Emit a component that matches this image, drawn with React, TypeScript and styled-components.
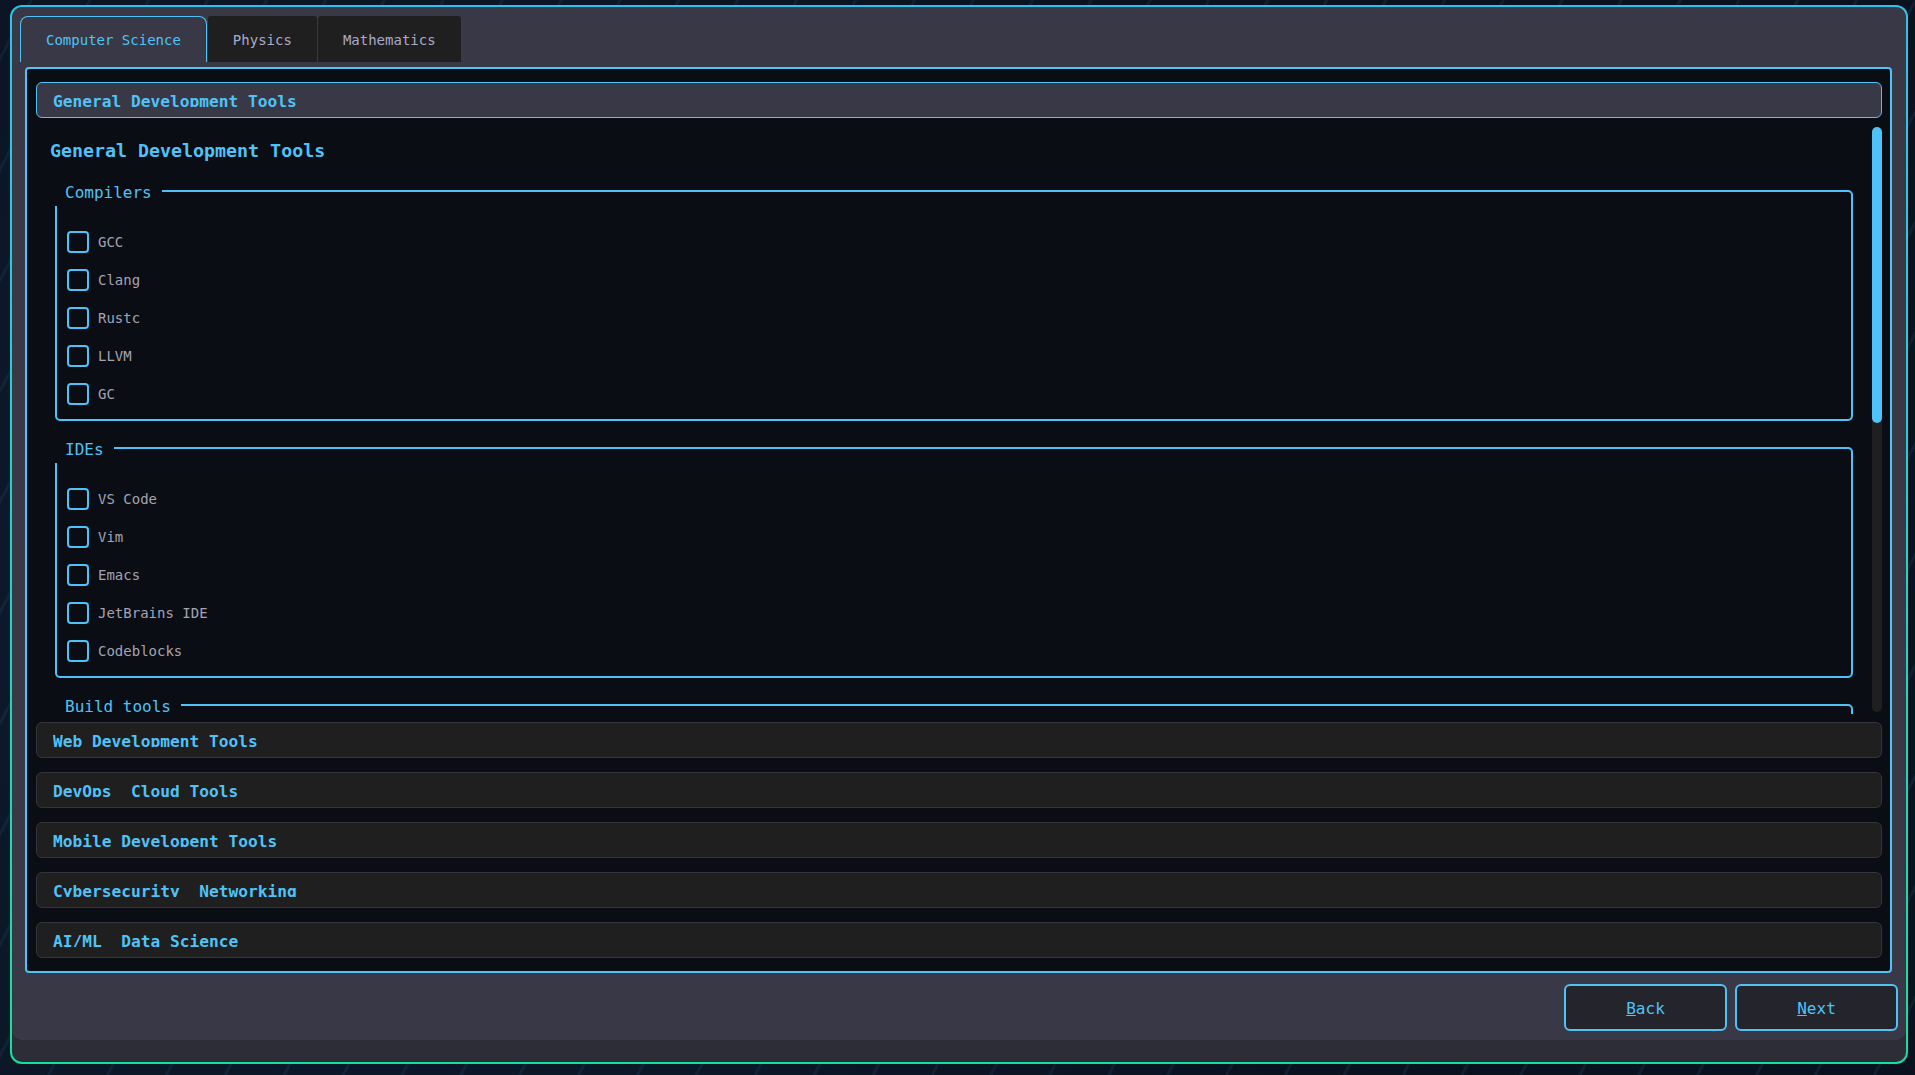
import React from "react";
import styled, { createGlobalStyle } from "styled-components";

const GlobalStyle = createGlobalStyle`
  html, body { margin: 0; padding: 0; }
  body {
    width: 1915px;
    height: 1075px;
    overflow: hidden;
    background-color: #0a1220;
    background-image:
      repeating-linear-gradient(118deg, transparent 0 26px, rgba(34, 74, 112, 0.22) 26px 29px, transparent 29px 52px),
      radial-gradient(circle at 20% 60%, #0e1d30 0%, #0a1220 60%);
    font-family: "DejaVu Sans Mono", "Liberation Mono", monospace;
  }
  #root { width: 1915px; height: 1075px; }
`;

const ACCENT = "#4fc3f7";

const Window = styled.div`
  box-sizing: border-box;
  margin: 5px 7px 0 10px;
  width: 1898px;
  height: 1059px;
  border: 2px solid transparent;
  border-radius: 12px;
  background:
    linear-gradient(#2d2d38, #2d2d38) padding-box,
    linear-gradient(180deg, #2cc3ea 0%, #1fd3c8 50%, #12e09c 100%) border-box;
  display: flex;
  flex-direction: column;
  padding-bottom: 22px;
  overflow: hidden;
`;

const Panel = styled.div`
  flex: 1;
  background: #383846;
  border-radius: 10px;
  display: flex;
  flex-direction: column;
  padding: 9px 0 9px 0;
  min-height: 0;
`;

const TabBar = styled.div`
  display: flex;
  gap: 1px;
  padding-left: 8px;
  height: 46px;
  margin-bottom: 5px;
`;

const Tab = styled.button<{ $active?: boolean }>`
  box-sizing: border-box;
  height: 46px;
  padding: 0 25px;
  font-family: "DejaVu Sans Mono", monospace;
  font-size: 14px;
  color: ${(p) => (p.$active ? ACCENT : "#a9a9c8")};
  background: ${(p) => (p.$active ? "#383846" : "#1f1f1f")};
  border: ${(p) => (p.$active ? `1px solid ${ACCENT}` : "none")};
  border-bottom: none;
  border-radius: ${(p) => (p.$active ? "8px 8px 0 0" : "3px 3px 0 0")};
  cursor: pointer;
  display: flex;
  align-items: center;
  padding-top: 1px;
`;

const Frame = styled.div`
  box-sizing: border-box;
  flex: 1;
  margin: 0 14px 0 13px;
  border: 2px solid ${ACCENT};
  border-radius: 4px;
  background: #0a0d14;
  padding: 13px 8px 13px 9px;
  display: flex;
  flex-direction: column;
  min-height: 0;
`;

const Item = styled.div<{ $open?: boolean }>`
  display: flex;
  flex-direction: column;
  padding-bottom: ${(p) => (p.$open ? "8px" : "14px")};
  &:last-child { padding-bottom: 0; }
`;

const Header = styled.div<{ $open?: boolean }>`
  box-sizing: border-box;
  height: 36px;
  border: 1px solid ${(p) => (p.$open ? ACCENT : "#34343c")};
  background: ${(p) => (p.$open ? "#383846" : "#1f1f1f")};
  border-radius: 6px;
  padding: 9px 16px 0 16px;
`;

const HeaderLabel = styled.div`
  height: 15px;
  overflow: hidden;
  font-size: 16.2px;
  line-height: 20px;
  font-weight: bold;
  color: ${ACCENT};
  white-space: pre;
`;

const Body = styled.div`
  margin-top: 8px;
  height: 588px;
  display: flex;
`;

const Viewport = styled.div`
  flex: 1;
  overflow: hidden;
  padding: 0 19px 0 14px;
`;

const Title = styled.h2`
  margin: 13px 0 0 0;
  font-size: 18.3px;
  line-height: 24px;
  font-weight: bold;
  color: ${ACCENT};
`;

const Groups = styled.div`
  display: flex;
  flex-direction: column;
  gap: 26px;
  margin: 27px 0 0 5px;
`;

const Group = styled.div`
  position: relative;
  border: 2px solid ${ACCENT};
  border-radius: 5px;
  padding: 39px 9px 14px 10px;
  display: flex;
  flex-direction: column;
  gap: 16px;
`;

const Legend = styled.div`
  position: absolute;
  top: -12px;
  left: -2px;
  padding: 0 10px;
  background: #0a0d14;
  font-size: 16px;
  line-height: 26px;
  color: ${ACCENT};
`;

const Option = styled.label`
  display: flex;
  align-items: center;
  gap: 9px;
  height: 22px;
  font-size: 14px;
  color: #a3a3b3;
  cursor: pointer;
`;

const Box = styled.span`
  box-sizing: border-box;
  width: 22px;
  height: 22px;
  border: 2px solid ${ACCENT};
  border-radius: 4px;
  flex-shrink: 0;
`;

const Track = styled.div`
  width: 10px;
  margin: 1px 0 2px 0;
  border-radius: 5px;
  background: #1f1f1f;
  display: flex;
  flex-direction: column;
`;

const Thumb = styled.div`
  width: 10px;
  border-radius: 5px;
  background: ${ACCENT};
`;

const Footer = styled.div`
  display: flex;
  justify-content: flex-end;
  gap: 8px;
  margin-top: 11px;
  padding-right: 8px;
`;

const NavButton = styled.button`
  box-sizing: border-box;
  width: 163px;
  height: 47px;
  border: 2px solid ${ACCENT};
  border-radius: 6px;
  background: #24242c;
  color: ${ACCENT};
  font-family: "DejaVu Sans Mono", monospace;
  font-size: 16px;
  cursor: pointer;
  padding-top: 2px;
  u { text-decoration-color: ${ACCENT}; }
`;

const groups = [
  { name: "Compilers", items: ["GCC", "Clang", "Rustc", "LLVM", "GC"] },
  { name: "IDEs", items: ["VS Code", "Vim", "Emacs", "JetBrains IDE", "Codeblocks"] },
  { name: "Build tools", items: ["Make", "CMake", "Ninja", "Gradle", "Bazel"] },
];

const sections = [
  "Web Development Tools",
  "DevOps  Cloud Tools",
  "Mobile Developent Tools",
  "Cybersecurity  Networking",
  "AI/ML  Data Science",
];

export default function App() {
  return (
    <>
      <GlobalStyle />
      <Window>
        <Panel>
          <TabBar>
            <Tab $active>Computer Science</Tab>
            <Tab>Physics</Tab>
            <Tab>Mathematics</Tab>
          </TabBar>
          <Frame>
            <Item $open>
              <Header $open>
                <HeaderLabel>General Development Tools</HeaderLabel>
              </Header>
              <Body>
                <Viewport>
                  <Title>General Development Tools</Title>
                  <Groups>
                    {groups.map((g) => (
                      <Group key={g.name}>
                        <Legend>{g.name}</Legend>
                        {g.items.map((it) => (
                          <Option key={it}>
                            <Box />
                            {it}
                          </Option>
                        ))}
                      </Group>
                    ))}
                  </Groups>
                </Viewport>
                <Track>
                  <Thumb style={{ height: 296 }} />
                </Track>
              </Body>
            </Item>
            {sections.map((s) => (
              <Item key={s}>
                <Header>
                  <HeaderLabel>{s}</HeaderLabel>
                </Header>
              </Item>
            ))}
          </Frame>
          <Footer>
            <NavButton>
              <u>B</u>ack
            </NavButton>
            <NavButton>
              <u>N</u>ext
            </NavButton>
          </Footer>
        </Panel>
      </Window>
    </>
  );
}
